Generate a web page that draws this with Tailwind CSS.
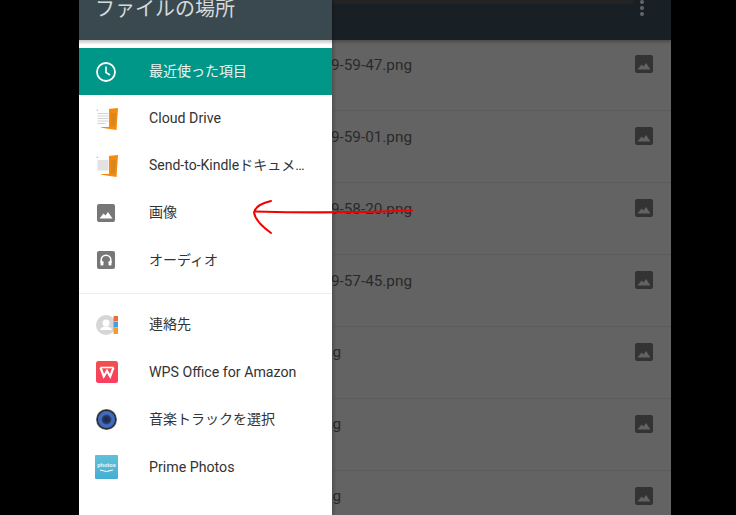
<!DOCTYPE html>
<html lang="ja">
<head>
<meta charset="utf-8">
<script src="https://cdn.jsdelivr.net/npm/@tailwindcss/browser@4"></script>
</head>
<body class="bg-black">
<div class="relative w-[736px] h-[515px] overflow-hidden bg-black font-['Roboto','Noto_Sans_CJK_JP',sans-serif]">
  <div class="relative ml-[79px] w-[592px] h-[515px] overflow-hidden bg-[#636363]">
    <!-- app bar -->
    <div class="relative h-[40px] bg-[#182026] shadow-[0_2px_3px_rgba(0,0,0,0.25)]">
      <div class="absolute left-[216px] top-[-40px] w-[340px] h-[44px] rounded-[6px] bg-[#232323]"></div>
      <div class="absolute left-[561px] top-0 flex flex-col gap-[2px]">
        <span class="w-[4px] h-[4px] rounded-full bg-[#636668]"></span>
        <span class="w-[4px] h-[4px] rounded-full bg-[#636668]"></span>
        <span class="w-[4px] h-[4px] rounded-full bg-[#636668]"></span>
      </div>
    </div>
    <!-- file list -->
    <div class="flex flex-col text-[15.3px] text-[#2a2a2a]">
      <div class="flex h-[71px] border-b border-[#5b5b5b]">
        <div class="w-[333px] pt-[15px] leading-[20px] text-right whitespace-nowrap overflow-hidden">9-59-47.png</div>
        <div class="ml-auto mr-[18px] mt-[15px]"><svg class="w-[18px] h-[18px]" viewBox="0 0 18 18"><rect width="18" height="18" rx="2" fill="#333"/><path d="M2.500 14.500 6.500 9.500 8.500 11.500 11 8 15.500 14.500Z" fill="#636363"/></svg></div>
      </div>
      <div class="flex h-[72px] border-b border-[#5b5b5b]">
        <div class="w-[333px] pt-[16px] leading-[20px] text-right whitespace-nowrap overflow-hidden">9-59-01.png</div>
        <div class="ml-auto mr-[18px] mt-[16px]"><svg class="w-[18px] h-[18px]" viewBox="0 0 18 18"><rect width="18" height="18" rx="2" fill="#333"/><path d="M2.500 14.500 6.500 9.500 8.500 11.500 11 8 15.500 14.500Z" fill="#636363"/></svg></div>
      </div>
      <div class="flex h-[72px] border-b border-[#5b5b5b]">
        <div class="w-[333px] pt-[16px] leading-[20px] text-right whitespace-nowrap overflow-hidden">9-58-20.png</div>
        <div class="ml-auto mr-[18px] mt-[16px]"><svg class="w-[18px] h-[18px]" viewBox="0 0 18 18"><rect width="18" height="18" rx="2" fill="#333"/><path d="M2.500 14.500 6.500 9.500 8.500 11.500 11 8 15.500 14.500Z" fill="#636363"/></svg></div>
      </div>
      <div class="flex h-[72px] border-b border-[#5b5b5b]">
        <div class="w-[333px] pt-[16px] leading-[20px] text-right whitespace-nowrap overflow-hidden">9-57-45.png</div>
        <div class="ml-auto mr-[18px] mt-[16px]"><svg class="w-[18px] h-[18px]" viewBox="0 0 18 18"><rect width="18" height="18" rx="2" fill="#333"/><path d="M2.500 14.500 6.500 9.500 8.500 11.500 11 8 15.500 14.500Z" fill="#636363"/></svg></div>
      </div>
      <div class="flex h-[72px] border-b border-[#5b5b5b]">
        <div class="w-[262px] pt-[15px] leading-[20px] text-right whitespace-nowrap overflow-hidden">.png</div>
        <div class="ml-auto mr-[18px] mt-[16px]"><svg class="w-[18px] h-[18px]" viewBox="0 0 18 18"><rect width="18" height="18" rx="2" fill="#333"/><path d="M2.500 14.500 6.500 9.500 8.500 11.500 11 8 15.500 14.500Z" fill="#636363"/></svg></div>
      </div>
      <div class="flex h-[72px] border-b border-[#5b5b5b]">
        <div class="w-[262px] pt-[15px] leading-[20px] text-right whitespace-nowrap overflow-hidden">.png</div>
        <div class="ml-auto mr-[18px] mt-[16px]"><svg class="w-[18px] h-[18px]" viewBox="0 0 18 18"><rect width="18" height="18" rx="2" fill="#333"/><path d="M2.500 14.500 6.500 9.500 8.500 11.500 11 8 15.500 14.500Z" fill="#636363"/></svg></div>
      </div>
      <div class="flex h-[72px]">
        <div class="w-[262px] pt-[15px] leading-[20px] text-right whitespace-nowrap overflow-hidden">.png</div>
        <div class="ml-auto mr-[18px] mt-[16px]"><svg class="w-[18px] h-[18px]" viewBox="0 0 18 18"><rect width="18" height="18" rx="2" fill="#333"/><path d="M2.500 14.500 6.500 9.500 8.500 11.500 11 8 15.500 14.500Z" fill="#636363"/></svg></div>
      </div>
    </div>
    <!-- drawer -->
    <div class="absolute left-0 top-0 w-[252.5px] h-[515px] bg-white shadow-[2px_0_3px_rgba(0,0,0,0.2)] flex flex-col text-[14px] text-[#333]">
      <div class="h-[40px] shrink-0 overflow-hidden bg-[#3a4950] pl-[16px]">
        <div class="mt-[-7px] text-[20px] leading-[30px] text-[#d5dadc] font-['Noto_Sans_CJK_JP',sans-serif]">ファイルの場所</div>
      </div>
      <div class="h-[8px] shrink-0 bg-gradient-to-b from-[#c4c4c4] to-white to-60%"></div>
      <div class="h-[47px] shrink-0 flex items-center bg-[#009688] text-[#e8f5f3]">
        <div class="w-[70px] pl-[17px]"><svg class="w-[20px] h-[20px]" viewBox="0 0 20 20" fill="none" stroke="#fff"><circle cx="10" cy="10" r="9" stroke-width="1.800"/><path d="M10 4.500V10.500L14 13" stroke-width="1.600"/></svg></div>
        <span class="pb-[1px]">最近使った項目</span>
      </div>
      <div class="h-[47px] shrink-0 flex items-center">
        <div class="w-[70px] pl-[16px]"><svg class="w-[24px] h-[24px]" viewBox="0 0 24 24"><path d="M13 2 23 1 21.500 23 5 20.500 14 19Z" fill="#f58a0b"/><path d="M16 6h5l-1.200 13h-3.800Z" fill="#d9861e"/><path d="M2 4 4 2H14V20H2Z" fill="#fdfdfd"/><path d="M1 4 3 2V4Z" fill="#c8c8c8"/><path d="M2.500 6.500h11M2.500 9h11M2.500 11.500h11M2.500 14h11M2.500 16.500h8" stroke="#d4d4d4" stroke-width="1"/></svg></div>
        <span class="pt-[1px] text-[14.2px]">Cloud Drive</span>
      </div>
      <div class="h-[47px] shrink-0 flex items-center">
        <div class="w-[70px] pl-[16px]"><svg class="w-[24px] h-[24px]" viewBox="0 0 24 24"><path d="M13 2 23 1 21.500 23 5 20.500 14 19Z" fill="#f58a0b"/><path d="M16 6h5l-1.200 13h-3.800Z" fill="#d9861e"/><path d="M2 4 4 2H14V20H2Z" fill="#fdfdfd"/><path d="M1 4 3 2V4Z" fill="#c8c8c8"/><path d="M2.500 6h11v10.500h-11Z" fill="#e2e2e2"/></svg></div>
        <span class="whitespace-nowrap">Send-to-Kindleドキュメ…</span>
      </div>
      <div class="h-[47px] shrink-0 flex items-center">
        <div class="w-[70px] pl-[18px]"><svg class="w-[18px] h-[18px]" viewBox="0 0 18 18"><rect width="18" height="18" rx="2" fill="#777"/><path d="M2.500 14.500 6.500 9.500 8.500 11.500 11 8 15.500 14.500Z" fill="#fff"/></svg></div>
        <span>画像</span>
      </div>
      <div class="h-[47px] shrink-0 flex items-center">
        <div class="w-[70px] pl-[18px]"><svg class="w-[18px] h-[18px]" viewBox="0 0 18 18"><rect width="18" height="18" rx="2" fill="#777"/><path d="M4.200 12V9a4.800 4.800 0 0 1 9.600 0v3" fill="none" stroke="#fff" stroke-width="1.600"/><rect x="3.500" y="10" width="3" height="4.500" rx="1" fill="#fff"/><rect x="11.500" y="10" width="3" height="4.500" rx="1" fill="#fff"/></svg></div>
        <span class="pt-[1px]">オーディオ</span>
      </div>
      <div class="h-[1px] mt-[10px] mb-[7px] shrink-0 bg-[#eeeeee]"></div>
      <div class="h-[47px] shrink-0 flex items-center">
        <div class="w-[70px] pl-[17px]"><svg class="w-[22px] h-[20px]" viewBox="0 0 22 20"><circle cx="10" cy="10" r="10" fill="#d6d6d6"/><circle cx="10" cy="8" r="3.500" fill="#fff"/><path d="M4 15c1-3 3-3.500 6-3.500s5 .5 6 3.500Z" fill="#fff"/><rect x="17.500" y="1" width="4.500" height="5.500" fill="#ef6c3e"/><rect x="17.500" y="7" width="4.500" height="5.500" fill="#3f9fe0"/><rect x="17.500" y="13" width="4.500" height="6" fill="#f49a2a"/></svg></div>
        <span>連絡先</span>
      </div>
      <div class="h-[48px] shrink-0 flex items-center">
        <div class="w-[70px] pl-[17px]"><svg class="w-[22px] h-[22px]" viewBox="0 0 22 22"><defs><linearGradient id="w" x1="0" y1="0" x2="0" y2="1"><stop offset="0" stop-color="#f0504a"/><stop offset="1" stop-color="#fc3d62"/></linearGradient></defs><rect width="22" height="22" rx="2.500" fill="url(#w)"/><path d="M4.500 6.500 7.800 15.500 11 10 14.200 15.500 17.500 6.500" fill="none" stroke="#fff" stroke-width="2.200"/><path d="M4.500 6.500H17.500" stroke="#fff" stroke-width="1.600"/></svg></div>
        <span class="pt-[1px] text-[14.2px]">WPS Office for Amazon</span>
      </div>
      <div class="h-[47px] shrink-0 flex items-center">
        <div class="w-[70px] pl-[17px]"><svg class="w-[21px] h-[21px]" viewBox="0 0 21 21"><defs><radialGradient id="s"><stop offset="0" stop-color="#1a2440"/><stop offset="0.35" stop-color="#24355f"/><stop offset="0.55" stop-color="#4570c4"/><stop offset="0.78" stop-color="#3a63b5"/><stop offset="0.86" stop-color="#222"/><stop offset="1" stop-color="#777"/></radialGradient></defs><circle cx="10.500" cy="10.500" r="10.500" fill="url(#s)"/></svg></div>
        <span>音楽トラックを選択</span>
      </div>
      <div class="h-[48px] shrink-0 flex items-center">
        <div class="w-[70px] pl-[16px]"><svg class="w-[23px] h-[24px]" viewBox="0 0 23 24"><defs><linearGradient id="p" x1="0" y1="0" x2="0" y2="1"><stop offset="0" stop-color="#62c0d8"/><stop offset="1" stop-color="#45aed2"/></linearGradient></defs><rect width="23" height="24" rx="1" fill="url(#p)"/><text x="11.500" y="12" text-anchor="middle" font-family="Roboto, sans-serif" font-size="6" font-weight="700" fill="#e3f3f8">photos</text><path d="M5 15q6.500 3 13 0" fill="none" stroke="#fff" stroke-width="1"/></svg></div>
        <span class="pt-[1px] text-[14.2px]">Prime Photos</span>
      </div>
    </div>
  </div>
  <!-- red hand-drawn arrow -->
  <svg class="absolute left-0 top-0 w-[736px] h-[515px] pointer-events-none" viewBox="0 0 736 515" fill="none" stroke="#f40000" stroke-linecap="round">
    <path d="M255 211.500C290 212.500 350 213 412 210.500" stroke-width="2.200"/>
    <path d="M271 201C262 203 255 207 254 212.500C255 220 264 228 271 233" stroke-width="2"/>
  </svg>
</div>
</body>
</html>
